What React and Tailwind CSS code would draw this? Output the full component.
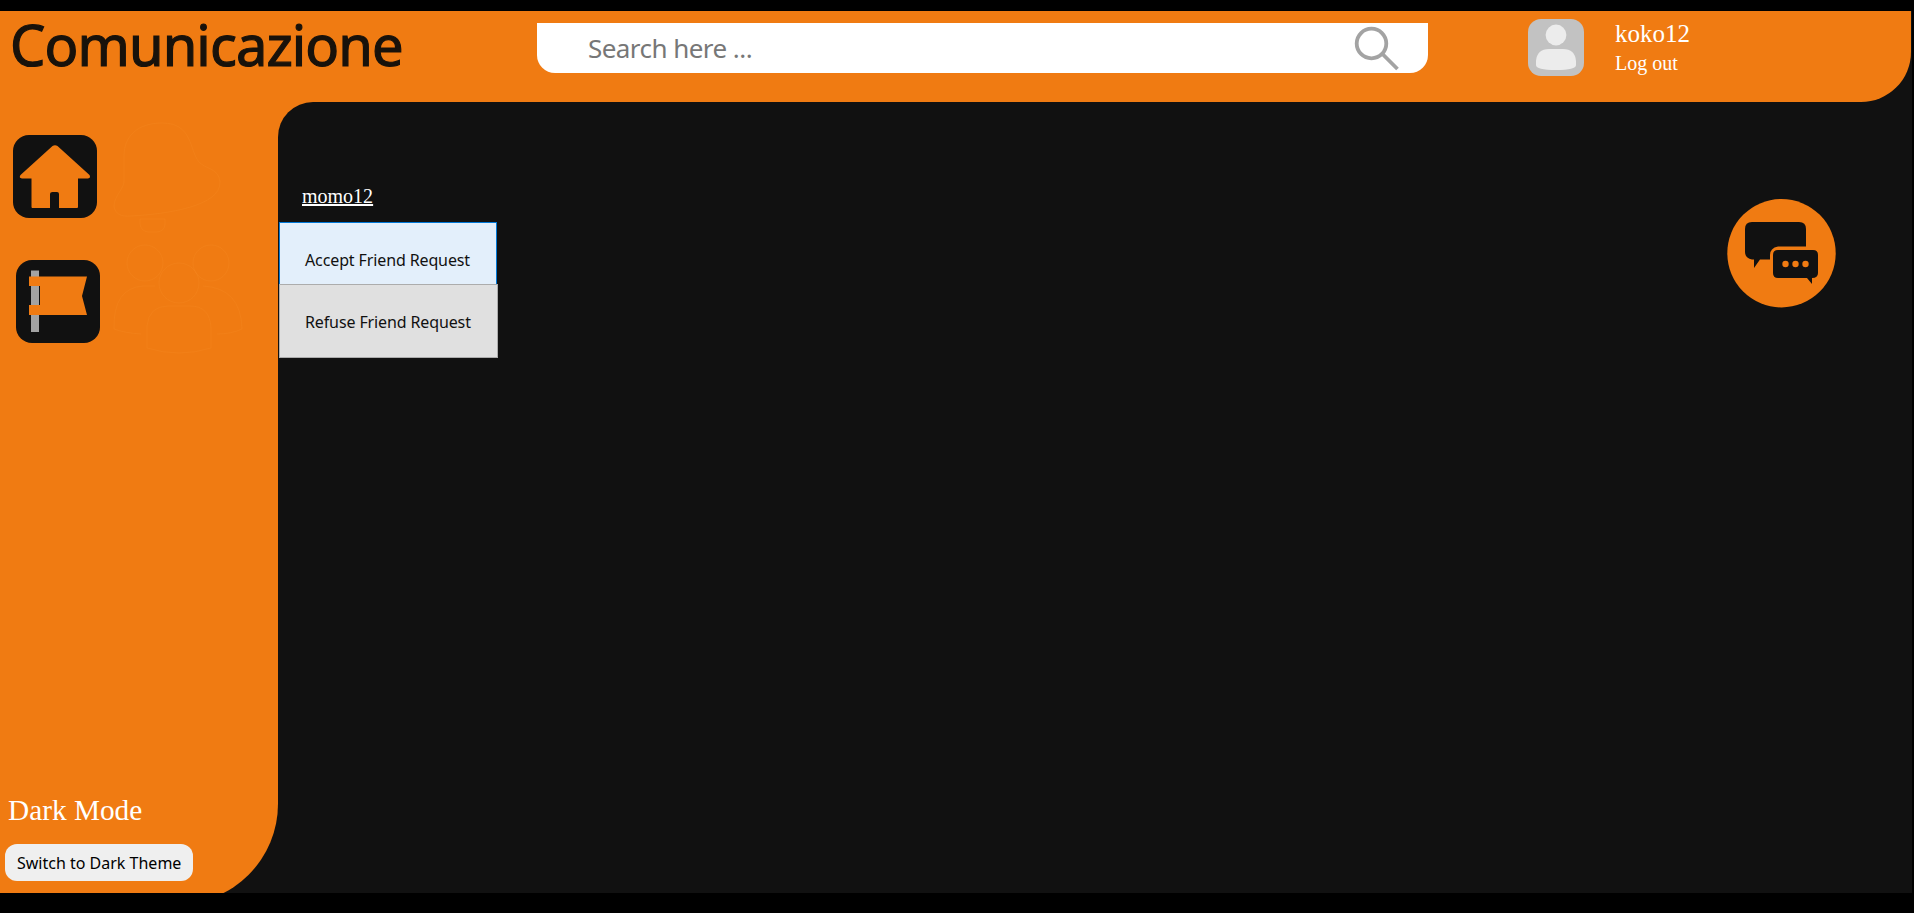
const sans = "font-['Noto_Sans','Open_Sans',sans-serif]";

function HomeIcon() {
  return (
    <svg width="84" height="83" viewBox="0 0 84 83" className="block">
      <rect width="84" height="83" rx="16" fill="#111" />
      <path d="M39.500 11Q42 9.300 44.500 11L76.500 40Q78 43 75 43.500H65V72Q65 73 64 73H46V59Q46 57 44 57H39.500Q37 57 37 59V73H19.500Q18.500 73 18.500 72V43.500H9Q5.500 43 7.500 40Z" fill="#f07b12" />
    </svg>
  );
}

function FlagIcon() {
  return (
    <svg width="84" height="83" viewBox="0 0 84 83" className="block">
      <rect width="84" height="83" rx="16" fill="#111" />
      <rect x="15" y="10.500" width="8" height="61.500" fill="#a3a3a3" />
      <path d="M13 16.500H71L66 36L71 55H13V45H24V26H13Z" fill="#f07b12" />
    </svg>
  );
}

function BellOutline() {
  return (
    <svg width="132" height="112" viewBox="0 0 132 112" fill="none" stroke="#f48a26" strokeOpacity="0.3" className="block">
      <path d="M49 1C26 1 11 13 11 34V58C12 66 1 74 1 84C2 92 8 95 18 94C55 92 108 84 107 60C106 46 92 47 86 40C76 28 80 1 49 1Z" />
      <path d="M27 97V102Q28 109 35 110H44Q52 109 52 102V97Z" />
    </svg>
  );
}

function PeopleOutline() {
  return (
    <svg width="132" height="112" viewBox="0 0 132 112" fill="none" stroke="#f48a26" strokeOpacity="0.3" className="block">
      <circle cx="32" cy="19" r="18" />
      <circle cx="98" cy="19" r="18" />
      <circle cx="66" cy="39" r="20" />
      <path d="M34 104V82Q36 62 55 62H77Q97 62 98 84V104Q66 114 34 104Z" />
      <path d="M28 90Q12 89 1 85Q0 44 30 42H42M90 42Q128 44 129 85Q118 90 104 90" />
    </svg>
  );
}

export default function App() {
  return (
    <div className="h-[913px] w-full overflow-hidden bg-black pt-[11px]">
      <div className="flex h-[882px] w-[1912px] flex-col bg-[#111]">
        <header className="flex h-[91px] w-[1911px] shrink-0 items-start rounded-br-[50px] bg-[#f07b12]">
          <div className={`${sans} w-[537px] shrink-0 pt-[4px] pl-[10px] text-[56px] leading-[58px] tracking-[-0.9px] whitespace-nowrap text-[#18120b] [-webkit-text-stroke:1.2px_#18120b]`}>
            Comunicazione
          </div>
          <div className="mt-[12px] flex h-[50px] w-[891px] shrink-0 justify-between rounded-b-[18px] bg-white pr-[28px] pl-[51px]">
            <span className={`${sans} text-[26px] leading-[50px] tracking-[-0.55px] whitespace-nowrap text-[#777]`}>
              Search here ...
            </span>
            <svg width="46" height="50" viewBox="0 0 46 50" fill="none" stroke="#a3a3a3" strokeWidth="3.800">
              <circle cx="17.500" cy="20.500" r="14.800" />
              <path d="M28.500 31L43.500 46" strokeWidth="3.800" />
            </svg>
          </div>
          <svg width="56" height="57" viewBox="0 0 56 57" className="mt-[8px] ml-[100px] shrink-0">
            <rect width="56" height="57" rx="13" fill="#c2c2c2" />
            <circle cx="28" cy="16" r="10.400" fill="#ececec" />
            <path d="M8 42Q9 30 21 30H35Q47 30 48 42V46Q48 51 28 51Q8 51 8 46Z" fill="#ececec" />
          </svg>
          <div className="ml-[31px] flex flex-col pt-[8px] font-['Liberation_Serif',serif] text-white">
            <span className="text-[25px] leading-[30px]">koko12</span>
            <span className="mt-[2px] text-[20px] leading-[24px]">Log out</span>
          </div>
        </header>
        <div className="flex h-[791px] shrink-0 items-start overflow-hidden">
          <aside className="flex h-[802px] w-[278px] shrink-0 flex-col rounded-br-[100px] bg-[#f07b12]">
            <div className="flex h-[124px] pt-[20px] pl-[13px]">
              <div className="w-[100px] pt-[13px]"><HomeIcon /></div>
              <BellOutline />
            </div>
            <div className="flex h-[124px] pt-[18px] pl-[16px]">
              <div className="w-[97px] pt-[16px]"><FlagIcon /></div>
              <PeopleOutline />
            </div>
            <div className="mt-auto flex flex-col items-start pb-[23px] pl-[5px]">
              <span className="pl-[3px] font-['Liberation_Serif',serif] text-[29.300px] leading-[34px] text-white">
                Dark Mode
              </span>
              <button className={`${sans} mt-[17px] h-[37px] w-[188px] rounded-[12px] bg-[#efefef] pl-[12px] text-left text-[16px] leading-[38px] whitespace-nowrap text-black`}>
                Switch to Dark Theme
              </button>
            </div>
          </aside>
          <div className="h-full flex-1 bg-linear-to-r from-[#f07b12] from-[40px] to-[#111] to-[40px]">
            <main className="flex h-full items-start justify-between rounded-tl-[35px] bg-[#111]">
              <div className="flex flex-col items-start pt-[81px]">
                <a className="ml-[24px] font-['Liberation_Serif',serif] text-[20px] leading-[26px] text-white underline">momo12</a>
                <div className="mt-[13px] ml-px flex flex-col">
                  <button className={`${sans} h-[62px] w-[218px] border border-b-0 border-[#0078d7] bg-[#e3effb] pl-[25px] text-left text-[16px] tracking-[-0.12px] whitespace-nowrap text-[#111]`}>
                    <span className="block pt-[13px] leading-[22px]">Accept Friend Request</span>
                  </button>
                  <button className={`${sans} h-[74px] w-[219px] border border-[#acacac] bg-[#e0e0e0] pl-[25px] text-left text-[16px] tracking-[-0.12px] whitespace-nowrap text-[#111]`}>
                    <span className="block pt-[2px] leading-[22px]">Refuse Friend Request</span>
                  </button>
                </div>
              </div>
              <svg width="109" height="109" viewBox="0 0 109 109" className="mt-[97px] mr-[76px]">
                <circle cx="54.500" cy="54.200" r="54.200" fill="#f07b12" />
                <path d="M25 23H72Q79 23 79 30V47.500H51Q43 49 43 56V60.500H33L27 69V60.500H25Q18 59 18 53V30Q18 23 25 23Z" fill="#111" />
                <path d="M51 51H86Q91 51 91 56V74Q91 79 85 79V85L80 79H51Q46 79 46 74V56Q46 51 51 51Z" fill="#111" />
                <g fill="#f07b12">
                  <circle cx="58.500" cy="65" r="3.200" />
                  <circle cx="68.500" cy="65" r="3.200" />
                  <circle cx="78.500" cy="65" r="3.200" />
                </g>
              </svg>
            </main>
          </div>
        </div>
      </div>
    </div>
  );
}
